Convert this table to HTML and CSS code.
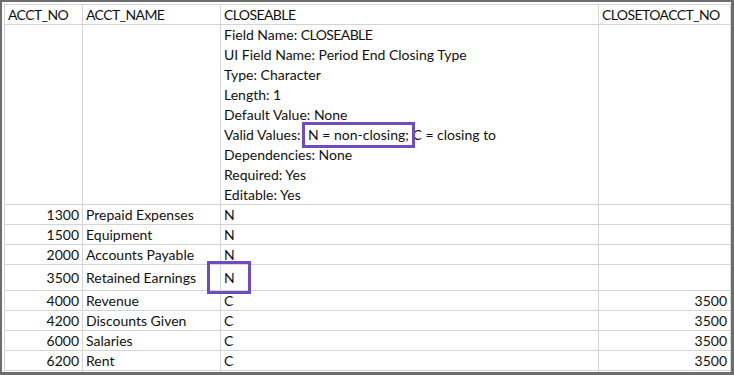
FILE: index.html
```html
<!DOCTYPE html>
<html lang="en">
<head>
  <meta charset="UTF-8">
  <meta name="viewport" content="width=device-width, initial-scale=1.0">
  <title>Chart of Accounts - CLOSEABLE</title>
  <link rel="stylesheet" href="styles.css">
</head>
<body>
  <div class="sheet">
    <table class="grid">
      <colgroup>
        <col class="c-no">
        <col class="c-name">
        <col class="c-close">
        <col class="c-to">
      </colgroup>
      <tr class="head">
        <td>ACCT_NO</td>
        <td>ACCT_NAME</td>
        <td>CLOSEABLE</td>
        <td>CLOSETOACCT_NO</td>
      </tr>
      <tr>
        <td></td>
        <td></td>
        <td class="notes">
          <div>Field Name: <span class="caps">CLOSEABLE</span></div>
          <div>UI Field Name: Period End Closing Type</div>
          <div>Type: Character</div>
          <div>Length: 1</div>
          <div>Default Value: None</div>
          <div>Valid Values: <span class="mark">N = non-closing;</span> C = closing to</div>
          <div>Dependencies: None</div>
          <div>Required: Yes</div>
          <div>Editable: Yes</div>
        </td>
        <td></td>
      </tr>
      <tr><td class="num">1300</td><td>Prepaid Expenses</td><td>N</td><td></td></tr>
      <tr><td class="num">1500</td><td>Equipment</td><td>N</td><td></td></tr>
      <tr><td class="num">2000</td><td>Accounts Payable</td><td>N</td><td></td></tr>
      <tr class="tall"><td class="num">3500</td><td>Retained Earnings</td><td><span class="mark-cell">N</span></td><td></td></tr>
      <tr><td class="num">4000</td><td>Revenue</td><td>C</td><td class="num">3500</td></tr>
      <tr><td class="num">4200</td><td>Discounts Given</td><td>C</td><td class="num">3500</td></tr>
      <tr><td class="num">6000</td><td>Salaries</td><td>C</td><td class="num">3500</td></tr>
      <tr><td class="num">6200</td><td>Rent</td><td>C</td><td class="num">3500</td></tr>
      <tr><td></td><td></td><td></td><td></td></tr>
    </table>
  </div>
</body>
</html>
```

FILE: styles.css
```css
body {
  margin: 0;
  font-family: Lato, "Open Sans", sans-serif;
  background: #fff;
}
/* Worksheet frame */
.sheet {
  width: 734px;
  height: 375px;
  box-sizing: border-box;
  border-style: solid;
  border-color: #6d6d6d;
  border-width: 2px 3px 3px 2px;
  padding: 2px 0 0 2px;
  overflow: hidden;
}
/* Cell grid */
.grid {
  border-collapse: collapse;
  table-layout: fixed;
  width: 726px;
  font-size: 14px;
  color: #111;
}
.c-no { width: 78px; }
.c-name { width: 138px; }
.c-close { width: 378px; }
.c-to { width: 132px; }
.grid td {
  border: 1px solid #d4d4d4;
  padding: 0 3px;
  line-height: 19px;
  height: 19px;
  white-space: nowrap;
  overflow: visible;
  vertical-align: middle;
}
.grid td.num {
  text-align: right;
}
.grid tr.tall td {
  height: 25px;
}
/* Column names are all caps, keep them tight */
.head td,
.caps {
  letter-spacing: -0.6px;
}
/* Multi-line field description */
.notes div {
  line-height: 20px;
}
.notes div:last-child {
  line-height: 19px;
}
/* Highlight boxes */
.mark,
.mark-cell {
  position: relative;
  display: inline-block;
  line-height: 20px;
}
.mark {
  margin-left: 4px;
}
.mark::after,
.mark-cell::after {
  content: "";
  position: absolute;
  box-sizing: border-box;
  border: 3px solid #6f4cc0;
}
.mark::after {
  top: -3px;
  bottom: -3px;
  left: -6px;
  right: -6px;
}
.mark-cell::after {
  top: -7px;
  bottom: -6px;
  left: -17px;
  right: -16px;
}
```
